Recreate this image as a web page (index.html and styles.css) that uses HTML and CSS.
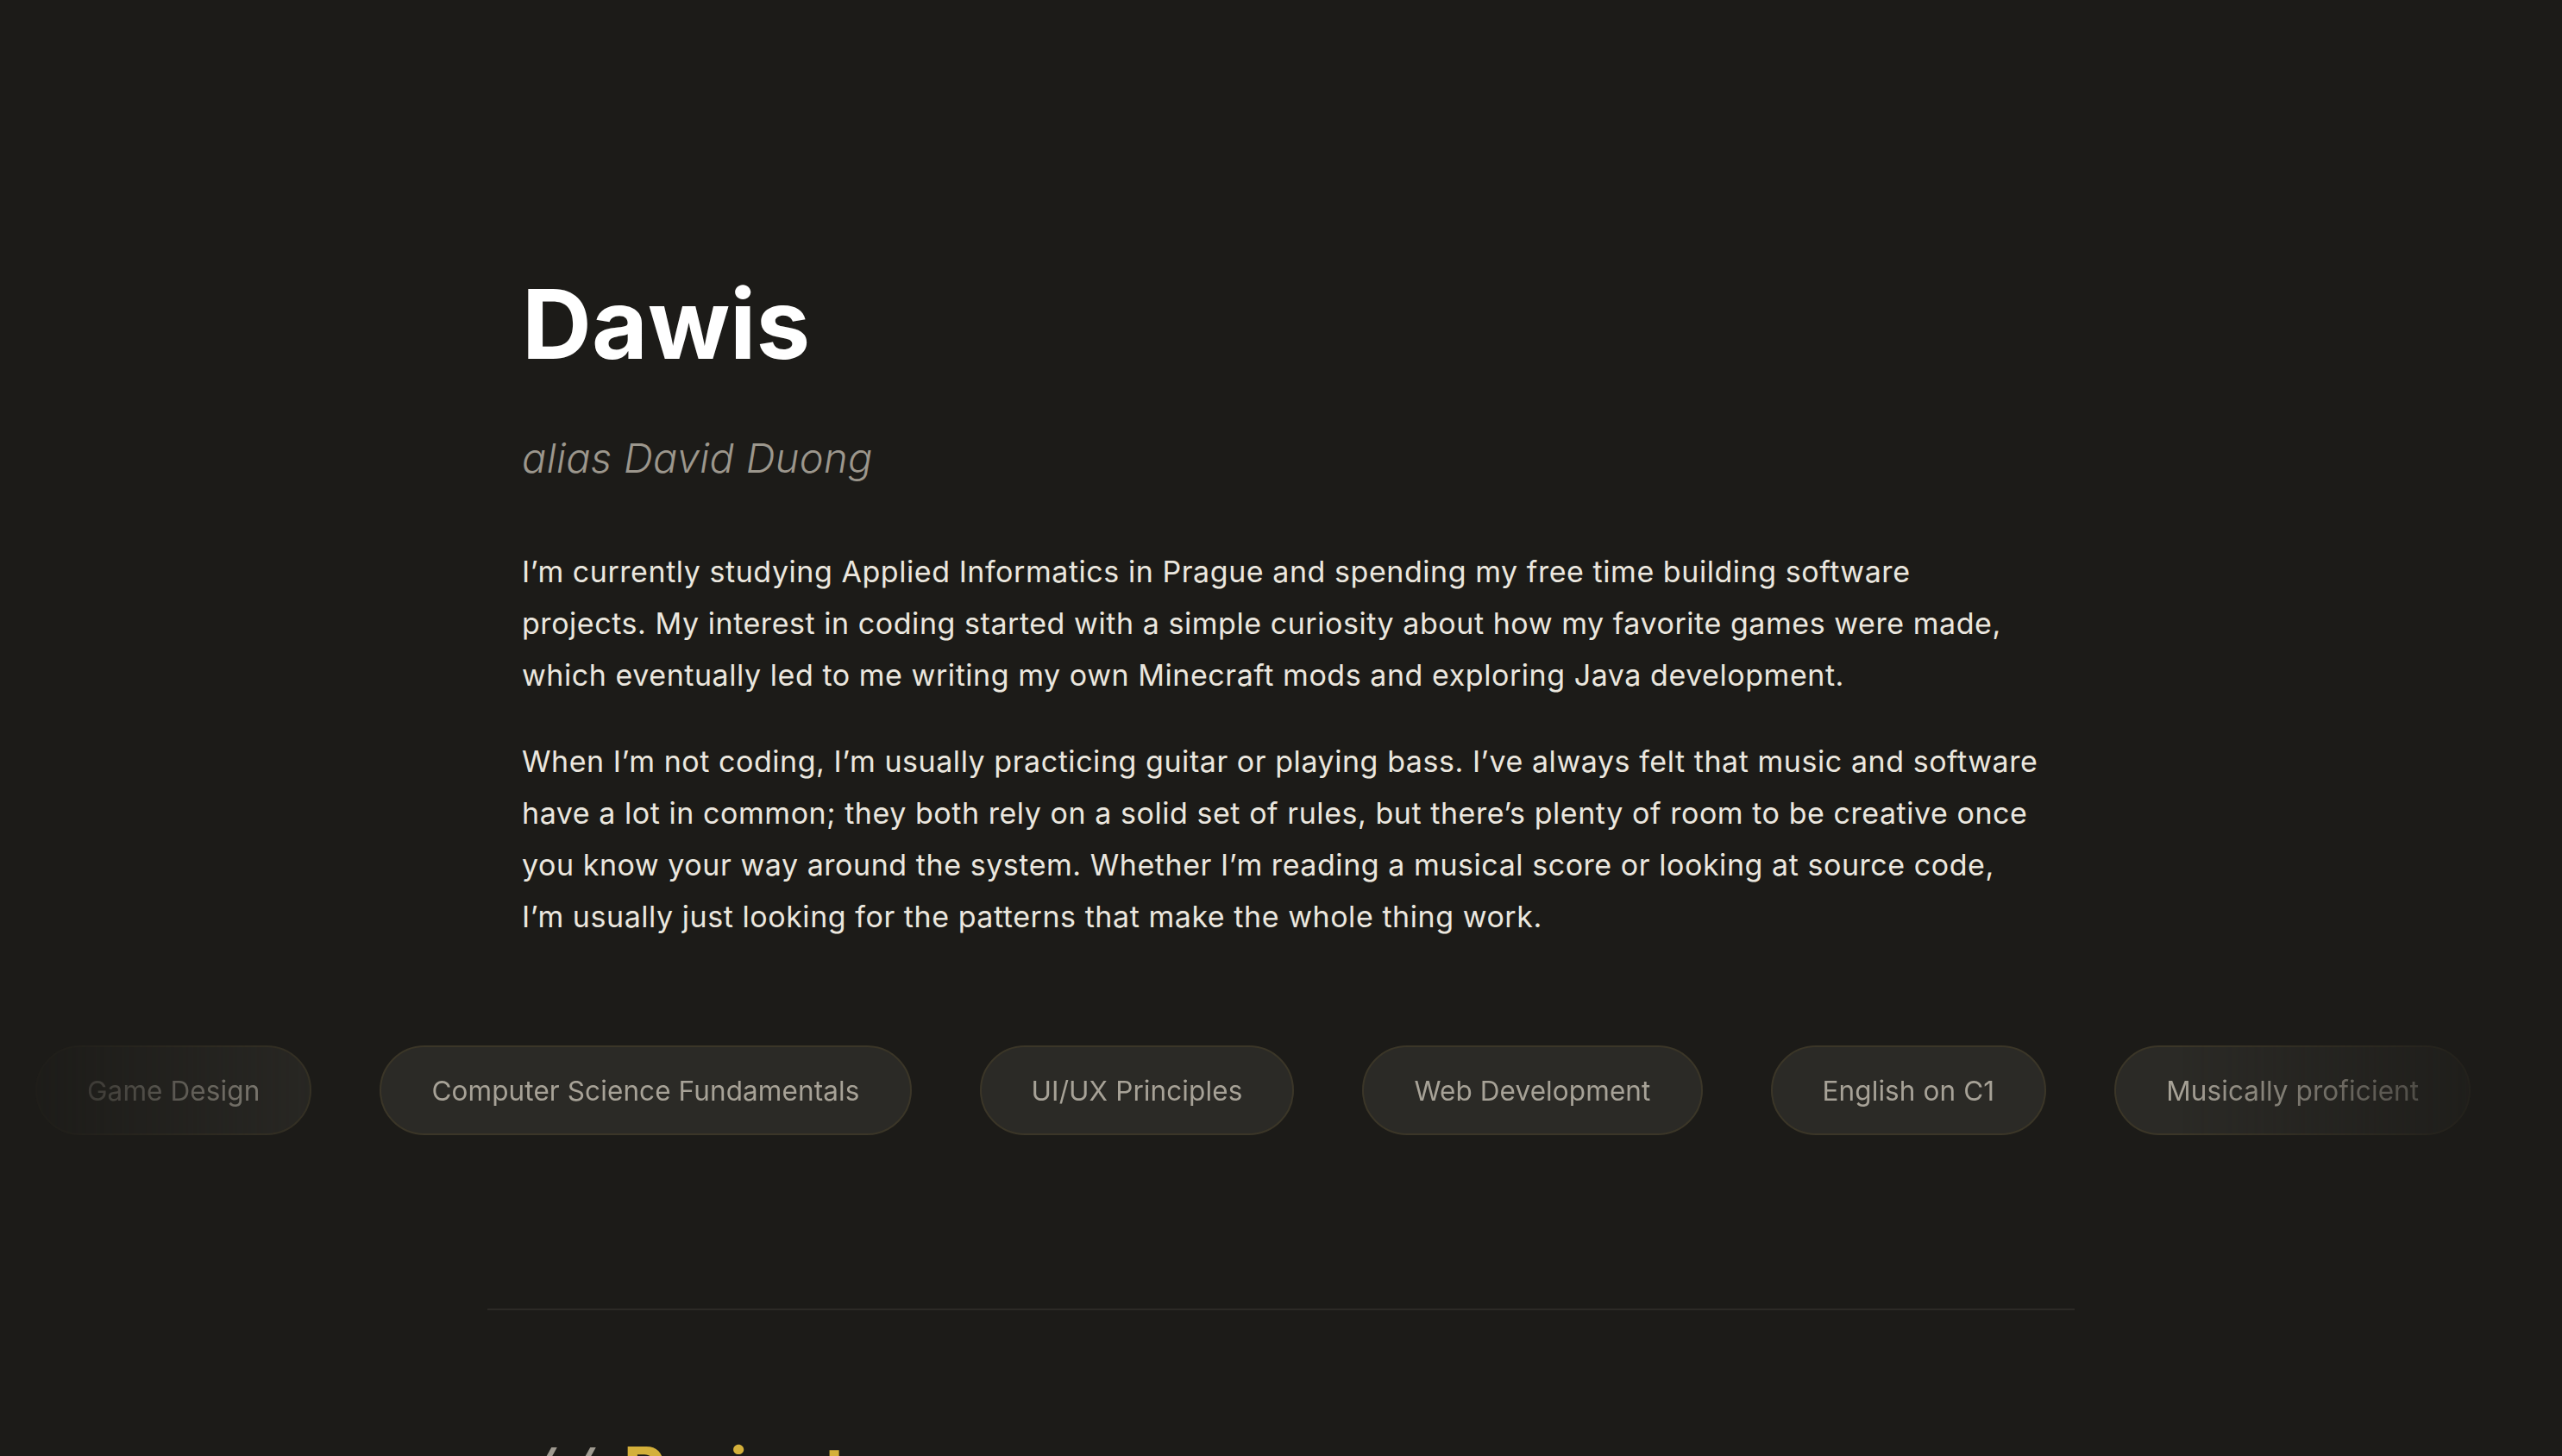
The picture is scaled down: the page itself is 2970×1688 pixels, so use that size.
FILE: index.html
```html
<!DOCTYPE html>
<html lang="en">
<head>
<meta charset="utf-8">
<title>Dawis</title>
<link rel="stylesheet" href="styles.css">
</head>
<body>
<main class="page">
  <section class="hero">
    <h1 class="hero-name">Dawis</h1>
    <p class="hero-alias">alias David Duong</p>
    <div class="hero-bio">
      <p>I’m currently studying Applied Informatics in Prague and spending my free time building software projects. My interest in coding started with a simple curiosity about how my favorite games were made, which eventually led to me writing my own Minecraft mods and exploring Java development.</p>
      <p>When I’m not coding, I’m usually practicing guitar or playing bass. I’ve always felt that music and software have a lot in common; they both rely on a solid set of rules, but there’s plenty of room to be creative once you know your way around the system. Whether I’m reading a musical score or looking at source code, I’m usually just looking for the patterns that make the whole thing work.</p>
    </div>
  </section>

  <section class="skills">
    <div class="skills-track">
      <span class="pill">Game Design</span>
      <span class="pill">Computer Science Fundamentals</span>
      <span class="pill">UI/UX Principles</span>
      <span class="pill">Web Development</span>
      <span class="pill">English on C1</span>
      <span class="pill">Musically proficient</span>
    </div>
  </section>

  <div class="divider-wrap"><hr class="divider"></div>

  <section class="projects">
    <h2 class="section-title"><span class="slashes">//</span> Projects</h2>
  </section>
</main>
</body>
</html>
```

FILE: styles.css
```css
html, body {
  margin: 0;
  padding: 0;
  background: #1c1b18;
}

body {
  font-family: Inter, "Noto Sans", "Liberation Sans", sans-serif;
  color: #e9e5dd;
  overflow: hidden;
  height: 1688px;
}

.page {
  display: flex;
  flex-direction: column;
}

.hero {
  width: 1760px;
  margin: 0 auto;
  padding-top: 319px;
  display: flex;
  flex-direction: column;
}

.hero-name {
  margin: 0;
  font-size: 112px;
  line-height: 112px;
  font-weight: 700;
  color: #ffffff;
}

.hero-alias {
  margin: 73px 0 0;
  font-size: 47px;
  line-height: 54px;
  font-style: italic;
  font-weight: 300;
  letter-spacing: 0.3px;
  color: #9c978d;
}

.hero-bio {
  margin-top: 75px;
  display: flex;
  flex-direction: column;
  gap: 40px;
}

.hero-bio p {
  margin: 0;
  font-size: 34px;
  line-height: 60px;
  letter-spacing: 0.55px;
  color: #ebe7df;
}

.skills {
  margin-top: 119px;
  overflow: hidden;
  -webkit-mask-image: linear-gradient(to right, transparent 0%, #000 15%, #000 85%, transparent 100%);
  mask-image: linear-gradient(to right, transparent 0%, #000 15%, #000 85%, transparent 100%);
}

.skills-track {
  display: flex;
  gap: 79px;
  padding-left: 41px;
  width: max-content;
}

.pill {
  display: inline-flex;
  align-items: center;
  height: 104px;
  box-sizing: border-box;
  padding: 0 58px;
  border: 2px solid #3b3628;
  border-radius: 999px;
  background: #2b2a26;
  color: #a7a297;
  font-size: 31.5px;
  letter-spacing: 0.1px;
  white-space: nowrap;
}

.divider-wrap {
  width: 1840px;
  margin: 201px auto 0;
}

.divider {
  margin: 0;
  border: 0;
  height: 2px;
  background: #2c2a26;
}

.projects {
  width: 1760px;
  margin: 141px auto 0;
}

.section-title {
  margin: 0;
  font-size: 75px;
  line-height: 90px;
  font-weight: 700;
  color: #d4b03a;
}

.slashes {
  font-family: "Liberation Mono", "DejaVu Sans Mono", monospace;
  color: #9f9a90;
  font-weight: 400;
  margin-right: 10px;
}
```
